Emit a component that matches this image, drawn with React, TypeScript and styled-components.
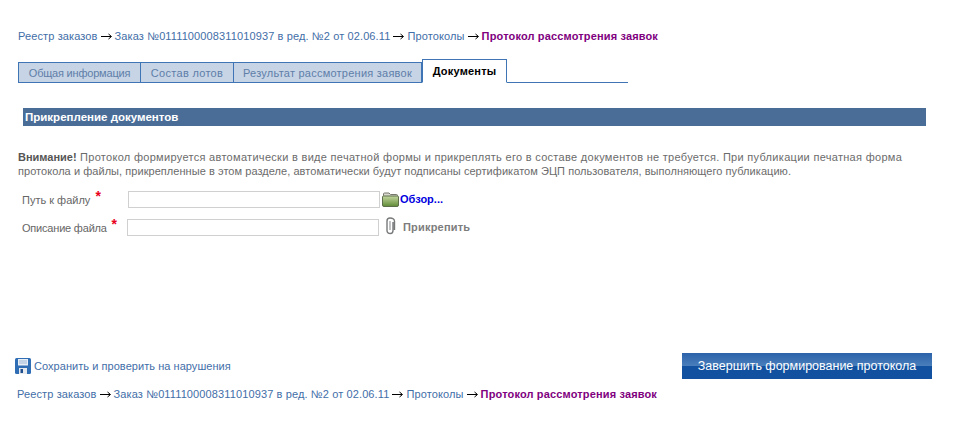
import styled, {createGlobalStyle} from 'styled-components';


const GlobalStyle = createGlobalStyle`
  html, body {
    margin: 0;
    padding: 0;
    background: #fff;
  }

  body {
    font-family: "Liberation Sans", Arial, sans-serif;
    font-size: 11px;
    color: #666;
  }
`;

const crumbs = ['Реестр заказов', 'Заказ №0111100008311010937 в ред. №2 от 02.06.11', 'Протоколы'];
const tabs = [
    {text: 'Общая информация', width: 121, spacing: -0.2},
    {text: 'Состав лотов', width: 92, spacing: 0.3},
    {text: 'Результат рассмотрения заявок', width: 187, spacing: 0.24},
];


const ArrowIcon = () => (
    <svg width="11" height="7" viewBox="0 0 11 7" fill="none" stroke="#000">
        <path d="M0 3.5 H10"/>
        <path d="M7.5 1 L10.5 3.5 L7.5 6"/>
    </svg>
);

const Breadcrumbs = ({className}: {className?: string}) => (
    <Crumbs className={className}>
        {crumbs.map(text => (
            <CrumbPart key={text}>
                <CrumbLink>{text}</CrumbLink>
                <ArrowIcon/>
            </CrumbPart>
        ))}
        <CrumbCurrent>Протокол рассмотрения заявок</CrumbCurrent>
    </Crumbs>
);


const FolderIcon = () => (
    <svg width="17" height="15" viewBox="0 0 17 15">
        <defs>
            <linearGradient id="folderBody" x1="0" y1="0" x2="0" y2="1">
                <stop offset="0" stopColor="#c5d8a0"/>
                <stop offset="1" stopColor="#5f8a36"/>
            </linearGradient>
        </defs>
        <path d="M1.5 3.5 V2 Q1.5 1 2.5 1 H7 L8.5 2.5 H14.5 Q15.5 2.5 15.5 3.5 V4.5 H1.5 Z" fill="#d9d9cf" stroke="#77776c"/>
        <path d="M.5 5 Q.5 4 1.5 4 H15.5 Q16.5 4 16.5 5 V13 Q16.5 14.5 15 14.5 H2 Q.5 14.5 .5 13 Z" fill="url(#folderBody)" stroke="#5c6e4a"/>
    </svg>
);

const ClipIcon = () => (
    <svg width="11" height="18" viewBox="0 0 11 18" fill="none" stroke="#77797a" strokeWidth="1.4">
        <path d="M8 5 V13.5 Q8 16.5 5.5 16.5 Q2 16.5 2 13.5 V4 Q2 1 5 1 Q9 1 9.5 4 V13"/>
        <path d="M5 4 V13" stroke="#a5a7a8"/>
    </svg>
);

const SaveIcon = () => (
    <svg width="16" height="16" viewBox="0 0 16 16">
        <path d="M1.5 0 H14.5 Q16 0 16 1.5 V14.5 Q16 16 14.5 16 H1.5 Q0 16 0 14.5 V1.5 Q0 0 1.5 0 Z" fill="#2f6db5"/>
        <rect x="3" y="1" width="10" height="6.5" fill="#e8eef5"/>
        <path d="M4 3 H12 M4 5 H12" stroke="#9db8d6"/>
        <rect x="4" y="10" width="8" height="6" fill="#e6e9ee"/>
        <rect x="5.5" y="11" width="2.5" height="4" fill="#1f4f8c"/>
    </svg>
);


const App = () => (
    <Page>
        <GlobalStyle/>
        <Breadcrumbs/>

        <TabBar>
            {tabs.map(tab => <Tab key={tab.text} $width={tab.width} $spacing={tab.spacing}>{tab.text}</Tab>)}
            <ActiveTab>Документы</ActiveTab>
        </TabBar>

        <SectionBar>Прикрепление документов</SectionBar>

        <Notice>
            <NoticeLine $spacing={0.3}>
                <b>Внимание!</b> Протокол формируется автоматически в виде печатной формы и прикреплять его в составе документов не требуется. При публикации печатная форма
            </NoticeLine>
            <NoticeLine $spacing={0.05}>
                протокола и файлы, прикрепленные в этом разделе, автоматически будут подписаны сертификатом ЭЦП пользователя, выполняющего публикацию.
            </NoticeLine>
        </Notice>

        <FormRow $gap={12}>
            <FieldLabel $width={106} $spacing={0}>Путь к файлу <Star>*</Star></FieldLabel>
            <TextInput/>
            <FolderSlot><FolderIcon/></FolderSlot>
            <BrowseLink>Обзор...</BrowseLink>
        </FormRow>
        <FormRow $gap={10}>
            <FieldLabel $width={105} $spacing={-0.2}>Описание файла <Star>*</Star></FieldLabel>
            <TextInput/>
            <ClipSlot><ClipIcon/></ClipSlot>
            <AttachLink>Прикрепить</AttachLink>
        </FormRow>

        <ActionRow>
            <SaveLink>
                <SaveIcon/>
                <span>Сохранить и проверить на нарушения</span>
            </SaveLink>
            <FinishButton>Завершить формирование протокола</FinishButton>
        </ActionRow>

        <BottomCrumbs/>
    </Page>
);

export default App;


const Page = styled.div`
  width: 957px;
  height: 421px;
  box-sizing: border-box;
  padding: 29px 0 0 18px;
  overflow: hidden;
`;

const Crumbs = styled.div`
  display: flex;
  align-items: center;
  height: 14px;
  line-height: 14px;
  white-space: nowrap;
  letter-spacing: .12px;
`;

const CrumbPart = styled.span`
  display: flex;
  align-items: center;
  gap: 3px;
  margin-right: 3px;
`;

const CrumbLink = styled.span`
  color: #3f6ea8;
`;

const CrumbCurrent = styled.span`
  color: #800080;
  font-weight: bold;
  letter-spacing: .15px;
`;

const TabBar = styled.div`
  display: flex;
  align-items: flex-end;
  width: 610px;
  height: 23px;
  margin-top: 16px;
  border-bottom: 1px solid #3f74b5;
`;

const Tab = styled.div<{$width: number; $spacing: number}>`
  width: ${p => p.$width}px;
  height: 19px;
  line-height: 20px;
  box-sizing: content-box;
  background: #c6d4e6;
  border: 1px solid #3f74b5;
  border-bottom: 0;
  margin-right: -1px;
  color: #5f7ea8;
  text-align: center;
  letter-spacing: ${p => p.$spacing}px;
  white-space: nowrap;
`;

const ActiveTab = styled.div`
  width: 83px;
  height: 22px;
  line-height: 22px;
  margin-left: 1px;
  margin-bottom: -1px;
  background: #fff;
  border: 1px solid #3f74b5;
  border-bottom: 1px solid #fff;
  color: #000;
  font-weight: bold;
  text-align: center;
  letter-spacing: .2px;
  white-space: nowrap;
`;

const SectionBar = styled.div`
  width: 903px;
  height: 18px;
  line-height: 18px;
  margin: 25px 0 0 5px;
  padding-left: 2px;
  box-sizing: border-box;
  background: #4a6d98;
  color: #fff;
  font-size: 11.5px;
  font-weight: bold;
`;

const Notice = styled.div`
  margin-top: 24px;
  line-height: 14px;
  color: #6b6b6b;
  white-space: nowrap;

  b {
    color: #555;
    letter-spacing: 0;
  }
`;

const NoticeLine = styled.div<{$spacing: number}>`
  letter-spacing: ${p => p.$spacing}px;
`;

const FormRow = styled.div<{$gap: number}>`
  display: flex;
  align-items: center;
  height: 18px;
  margin-top: ${p => p.$gap}px;
  padding-left: 4px;
`;

const FieldLabel = styled.div<{$width: number; $spacing: number}>`
  width: ${p => p.$width}px;
  letter-spacing: ${p => p.$spacing}px;
  color: #666;
  white-space: nowrap;
`;

const Star = styled.span`
  position: relative;
  top: -3px;
  left: 2px;
  color: #e8001c;
  font-size: 14px;
  font-weight: bold;
`;

const TextInput = styled.div`
  width: 250px;
  height: 15px;
  background: #fff;
  border: 1px solid #d0d0d0;
`;

const FolderSlot = styled.div`
  display: flex;
  margin: 1px 1px 0 2px;
`;

const BrowseLink = styled.span`
  color: #0000e0;
  font-weight: bold;
`;

const ClipSlot = styled.div`
  display: flex;
  margin: -3px 7px 0 6px;
`;

const AttachLink = styled.span`
  color: #7d7d7d;
  font-weight: bold;
  letter-spacing: .2px;
`;

const ActionRow = styled.div`
  display: flex;
  align-items: center;
  justify-content: space-between;
  width: 917px;
  height: 26px;
  margin: 117px 0 0 -3px;
`;

const SaveLink = styled.div`
  display: flex;
  align-items: center;
  gap: 3px;
  color: #3f6ea8;
  letter-spacing: .05px;
`;

const FinishButton = styled.div`
  width: 250px;
  height: 26px;
  line-height: 26px;
  text-align: center;
  color: #fff;
  font-size: 12.5px;
  background: linear-gradient(#2b62a9 0, #4a7fbc 50%, #11519f 50%, #11519f 100%);
`;

const BottomCrumbs = styled(Breadcrumbs)`
  margin: 8px 0 0 -1px;
`;
